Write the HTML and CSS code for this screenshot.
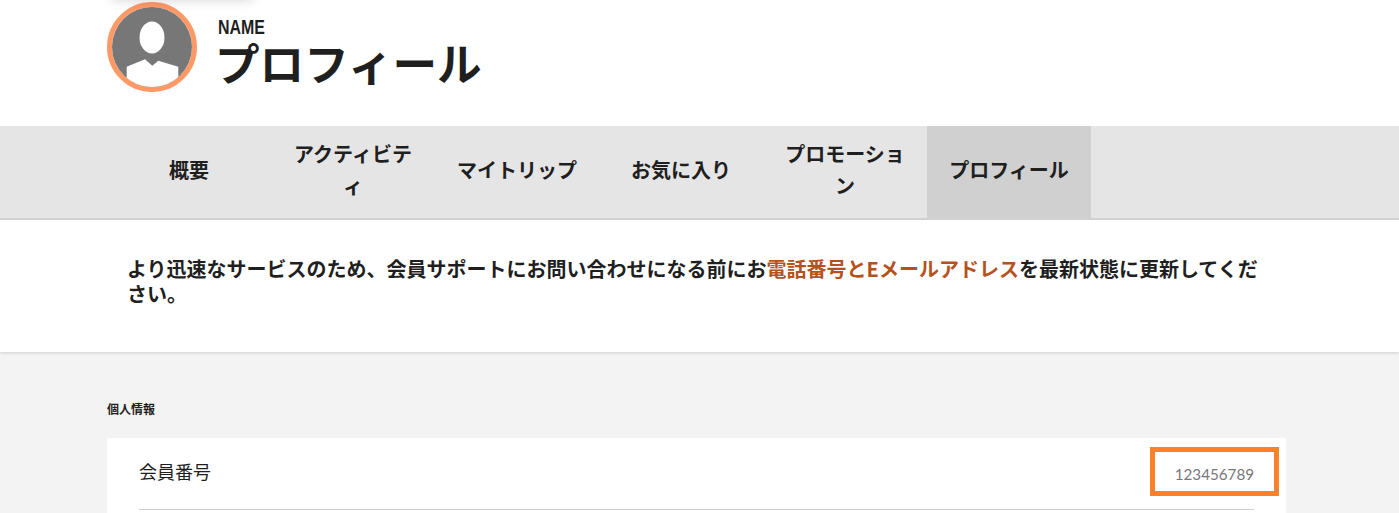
FILE: index.html
```html
<!DOCTYPE html>
<html lang="ja">
<head>
  <meta charset="UTF-8" />
  <meta name="viewport" content="width=device-width, initial-scale=1.0"/>
  <title>プロフィール</title>
  <link rel="stylesheet" href="styles.css">
</head>
<body>
  <header class="top">
    <div class="top-shadow"></div>
    <div class="avatar">
      <svg viewBox="0 0 80 80" width="80" height="80">
        <defs><clipPath id="avatarClip"><circle cx="40" cy="40" r="40"/></clipPath></defs>
        <g clip-path="url(#avatarClip)">
          <rect width="80" height="80" fill="#777"/>
          <ellipse cx="40" cy="30.5" rx="12.5" ry="16" fill="#fff"/>
          <polygon points="14.7,59.7 33,52.3 40.3,58.7 46.3,53.7 66.3,59.7 66.3,80 14.7,80" fill="#fff"/>
        </g>
      </svg>
    </div>
    <div class="who">
      <div class="who-name">NAME</div>
      <h1>プロフィール</h1>
    </div>
  </header>

  <nav class="tabs">
    <a href="#" class="tab">概要</a>
    <a href="#" class="tab">アクティビティ</a>
    <a href="#" class="tab">マイトリップ</a>
    <a href="#" class="tab">お気に入り</a>
    <a href="#" class="tab">プロモーション</a>
    <a href="#" class="tab active">プロフィール</a>
  </nav>

  <section class="notice">
    <p>より迅速なサービスのため、会員サポートにお問い合わせになる前にお<span class="hl">電話番号とEメールアドレス</span>を最新状態に更新してください。</p>
  </section>

  <main class="info">
    <h2>個人情報</h2>
    <div class="card">
      <div class="row">
        <span class="row-label">会員番号</span>
        <span class="row-value">123456789</span>
        <span class="mark"></span>
      </div>
    </div>
  </main>
</body>
</html>
```

FILE: styles.css
```css
html, body {
  height: 513px;
  overflow: hidden;
}
body {
  margin: 0;
  font-family: 'Noto Sans CJK JP', 'Noto Sans', sans-serif;
  color: #1f1f1f;
  background: #f3f3f3;
}
/* header */
.top {
  position: relative;
  display: flex;
  gap: 21px;
  height: 126px;
  padding: 2px 0 0 107px;
  box-sizing: border-box;
  background: #fff;
}
.top-shadow {
  position: absolute;
  top: -20px;
  left: 112px;
  width: 140px;
  height: 20px;
  box-shadow: 0 0 12px rgba(0,0,0,0.18);
}
.avatar {
  width: 80px;
  height: 80px;
  border: 5px solid #ff9966;
  border-radius: 50%;
}
.avatar svg {
  display: block;
}
.who {
  padding-top: 14px;
  margin-left: -3px;
}
.who-name {
  margin-left: 3px;
  font-family: 'Liberation Sans', sans-serif;
  font-size: 21px;
  font-weight: 700;
  line-height: 22px;
  transform: scaleX(0.76);
  transform-origin: left;
}
.who h1 {
  margin: -1px 0 0;
  font-size: 44.6px;
  font-weight: 700;
  line-height: 50px;
}
/* tabs */
.tabs {
  display: flex;
  height: 92px;
  padding-left: 107px;
  background: #e5e5e5;
  border-bottom: 2px solid #d4d4d4;
}
.tab {
  display: flex;
  align-items: center;
  justify-content: center;
  width: 164px;
  padding: 0 20px 4px;
  box-sizing: border-box;
  font-size: 20px;
  font-weight: 700;
  line-height: 32px;
  text-align: center;
  text-decoration: none;
  color: #1f1f1f;
}
.tab.active {
  background: #d0d0d0;
}
/* notice */
.notice {
  height: 132px;
  padding: 36px 128px 0 127px;
  box-sizing: border-box;
  background: #fff;
  box-shadow: 0 1px 3px rgba(0,0,0,0.15);
}
.notice p {
  margin: 0;
  font-size: 20px;
  font-weight: 700;
  line-height: 25px;
}
.hl {
  color: #b5521b;
}
/* personal info */
.info {
  padding: 48px 113px 0 107px;
}
.info h2 {
  margin: 0 0 20px;
  font-size: 12px;
  font-weight: 700;
  line-height: 18px;
}
.card {
  padding: 0 32px 3px;
  background: #fff;
}
.row {
  position: relative;
  display: flex;
  justify-content: space-between;
  align-items: flex-start;
  height: 50px;
  padding-top: 21px;
  border-bottom: 1px solid #cfcfcf;
}
.row-label {
  font-size: 18px;
  line-height: 24px;
}
.row-value {
  margin-top: 5px;
  font-family: 'Lato', sans-serif;
  font-size: 15.2px;
  line-height: 20px;
  color: #77777c;
}
.mark {
  position: absolute;
  top: 9px;
  right: -25px;
  width: 119px;
  height: 39px;
  border: 5px solid #ff8026;
}
```
